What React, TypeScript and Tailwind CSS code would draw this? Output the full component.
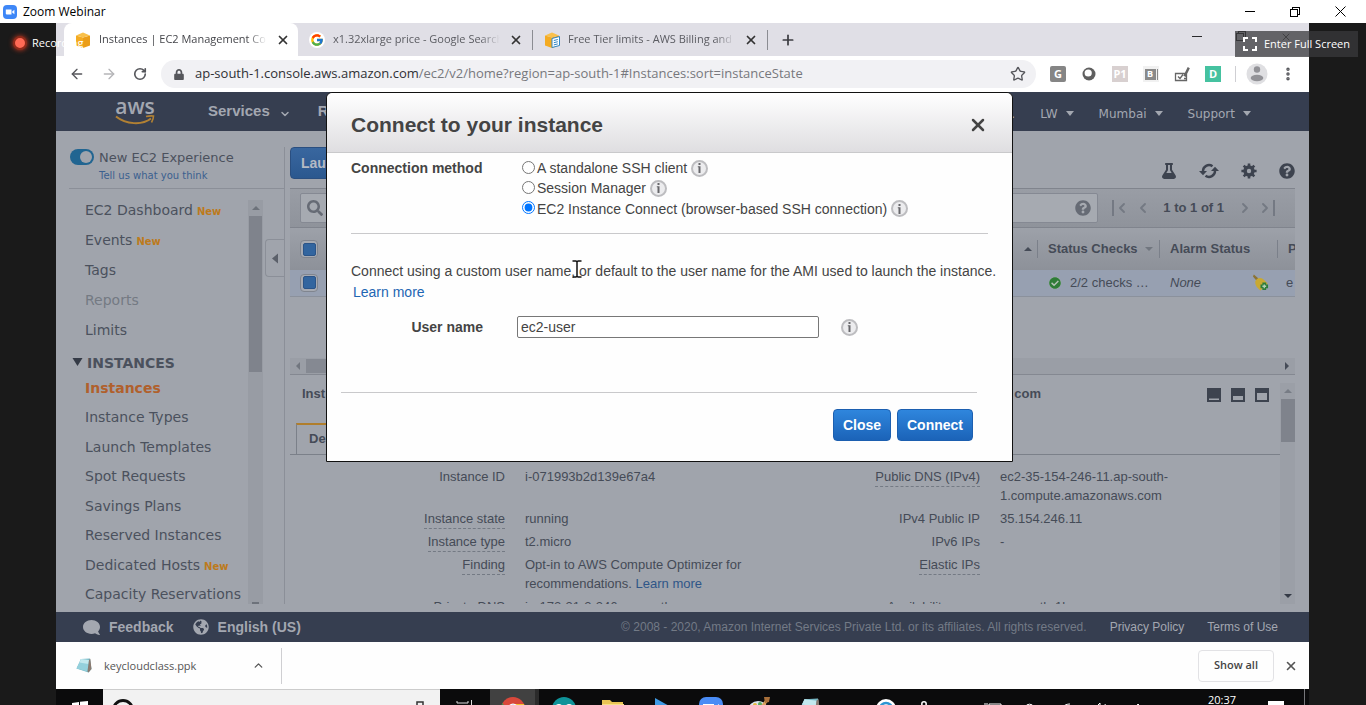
import React from "react";
import {
  FaCheckCircle,
  FaComment,
  FaFlask,
  FaGlobeAmericas,
  FaLock,
  FaQuestionCircle,
  FaSearch,
} from "react-icons/fa";
import { FcGoogle } from "react-icons/fc";
import {
  ArrowLeft,
  ArrowRight,
  ChevronUp,
  ChevronDown,
  ChevronLeft,
  ChevronRight,
  EllipsisVertical,
  Plus,
  RotateCw,
  Star,
  X,
} from "lucide-react";

const UI = "font-['Open_Sans','Noto_Sans',sans-serif]";
const ARIAL = "font-['Liberation_Sans',Arial,sans-serif]";
const VERDANA = "font-['DejaVu_Sans',Verdana,sans-serif]";

function RestoreIcon({ className }: { className?: string }) {
  return (
    <svg viewBox="0 0 10 10" className={className} fill="none" stroke="currentColor" shapeRendering="crispEdges">
      <path d="M0.5 2.5h7v7h-7zM2.5 2.5v-2h7v7h-2" />
    </svg>
  );
}

function CubeIcon({ doc = false }: { doc?: boolean }) {
  return (
    <svg viewBox="0 0 16 16" className="h-4 w-4 shrink-0">
      <path d="M1 3.500 8 5.500V16l-7-2.500z" fill="#f4ab22" />
      <path d="M15 3.500 8 5.500V16l7-2.500z" fill="#eb9d18" />
      <path d="M8 0.500 15 3.500 8 5.500 1 3.500z" fill="#f9c04a" />
      {doc && (
        <g>
          <path d="M8 6.500 15.500 4.500v9L8 15.500z" fill="#fff" stroke="#2f86c4" />
          <path d="M9.800 8.500l4-1M9.800 10.700l4-1M9.800 12.900l4-1" stroke="#2f86c4" />
        </g>
      )}
    </svg>
  );
}

function Tab({ icon, title, active = false }: { icon: React.ReactNode; title: string; active?: boolean }) {
  return (
    <div
      className={
        active
          ? "flex w-[234px] items-center rounded-t-lg bg-white pl-[11px] pr-2 text-[#45464b]"
          : "relative flex w-[235px] items-center pl-[11px] pr-[10px] text-[#5b5c62] after:absolute after:right-0 after:top-[7px] after:h-5 after:w-px after:bg-[#8b8c92]"
      }
    >
      {icon}
      <span className="ml-2 min-w-0 flex-1 overflow-hidden whitespace-nowrap text-[11px] [mask-image:linear-gradient(to_right,black_88%,transparent)]">
        {title}
      </span>
      <button aria-label="Close tab" className="ml-[9px]">
        <X className="h-[14px] w-[14px] text-[#333]" strokeWidth={3} />
      </button>
    </div>
  );
}

function Browser() {
  return (
    <header className={UI}>
      <div className="flex h-[33px] bg-[#e0dfe6] pl-2">
        <Tab active icon={<CubeIcon />} title="Instances | EC2 Management Console" />
        <Tab
          icon={
            <span className="rounded-full bg-white p-px">
              <FcGoogle className="h-[14px] w-[14px]" />
            </span>
          }
          title="x1.32xlarge price - Google Search"
        />
        <Tab icon={<CubeIcon doc />} title="Free Tier limits - AWS Billing and Cost" />
        <button aria-label="New tab" className="ml-3">
          <Plus className="h-4 w-4 text-[#3c3d42]" strokeWidth={2.600} />
        </button>
        <div className="ml-auto flex items-start gap-[34px] pr-[17px] pt-2 text-[#2a2a2d]">
          <button aria-label="Minimize browser" className="mt-[5px] h-px w-[10px] bg-current" />
          <button aria-label="Restore browser">
            <RestoreIcon className="h-[10px] w-[10px]" />
          </button>
          <button aria-label="Close browser">
            <X className="h-3 w-3" strokeWidth={1.500} />
          </button>
        </div>
      </div>
      <div className="flex h-9 items-center bg-white pl-[13px] pr-[13px] text-[#55565b]">
        <button aria-label="Back">
          <ArrowLeft className="h-4 w-4" />
        </button>
        <button aria-label="Forward" className="ml-4 text-[#b5b5b8]">
          <ArrowRight className="h-4 w-4" />
        </button>
        <button aria-label="Reload" className="ml-4">
          <RotateCw className="h-[14px] w-[14px]" strokeWidth={2.800} />
        </button>
        <div className="ml-[14px] flex h-7 min-w-0 flex-1 items-center rounded-full bg-[#f1f1f4] pl-[13px] pr-[10px]">
          <FaLock className="h-[11px] w-[10px] shrink-0" />
          <p className="ml-[11px] flex-1 truncate text-[13px] text-[#77787d]">
            <span className="text-[#2f3035]">ap-south-1.console.aws.amazon.com</span>
            /ec2/v2/home?region=ap-south-1#Instances:sort=instanceState
          </p>
          <button aria-label="Bookmark">
            <Star className="h-4 w-4" />
          </button>
        </div>
        <div className="ml-[14px] flex items-center gap-[15px] text-[11px] font-bold">
          <span className="grid h-4 w-4 place-items-center rounded-xs bg-[#858585] text-white">G</span>
          <svg viewBox="0 0 16 16" className="h-4 w-4">
            <circle cx="8" cy="8" r="6.500" fill="#5f5f5f" />
            <circle cx="7.200" cy="7" r="3.600" fill="#fff" />
          </svg>
          <span className="grid h-4 w-4 place-items-center bg-[#d8d0d0] text-white">P1</span>
          <span className="flex h-4 w-4 items-center justify-center gap-px bg-[#f1f1f1]">
            <span className="flex h-[11px] w-[11px] items-center justify-center bg-[#8a8a8a] text-[9px] text-white">B</span>
            <span className="h-[11px] w-px bg-[#8a8a8a]" />
          </span>
          <svg viewBox="0 0 16 16" className="h-4 w-4" fill="none" stroke="#666" strokeWidth="1.300">
            <path d="M1.500 7.500h11v7h-11zM4 10.500l2 2 3-4M10 10l4-8 1 .6-4 8M10 12.500h2" />
          </svg>
          <span className="grid h-4 w-4 place-items-center bg-[#45c2a0] text-white">D</span>
        </div>
        <span className="ml-[14px] h-4 w-px bg-[#cfcfd3]" />
        <button aria-label="Profile" className="ml-[10px]">
          <svg viewBox="0 0 22 22" className="h-[22px] w-[22px]">
            <circle cx="11" cy="11" r="10.500" fill="#dfdfe2" />
            <circle cx="11" cy="6.500" r="3.200" fill="#929297" />
            <ellipse cx="11" cy="15" rx="6.300" ry="3.200" fill="#929297" />
          </svg>
        </button>
        <button aria-label="Browser menu" className="ml-3">
          <EllipsisVertical className="h-4 w-4" strokeWidth={3.200} />
        </button>
      </div>
    </header>
  );
}

function NavItem({ label }: { label: string }) {
  return (
    <button className="flex items-center gap-2">
      {label}
      <svg viewBox="0 0 8 5" className="h-[5px] w-2 shrink-0" fill="currentColor">
        <path d="M0 0h8L4 5z" />
      </svg>
    </button>
  );
}

function AwsNav() {
  return (
    <nav className="flex h-[39px] items-center bg-[#363e50] pr-[58px] text-[#a3a7b0]">
      <a href="#home" aria-label="aws" className="ml-[59px] flex w-10 flex-col items-center">
        <span className={`text-[21px] leading-[18px] font-semibold ${UI}`}>aws</span>
        <svg viewBox="0 0 40 11" className="h-[11px] w-10" fill="none" stroke="#b28133" strokeWidth="2">
          <path d="M1 1.500C11 9.500 27 10.500 36 3.500" />
          <path d="M31 1.500q4-1 7.500-.5q0 3-2 6.500" strokeWidth="1.600" />
        </svg>
      </a>
      <button className={`ml-[53px] flex items-center gap-[9px] text-[15px] font-bold ${ARIAL}`}>
        Services <ChevronDown className="mt-1 h-3 w-3" strokeWidth={3} />
      </button>
      <button className={`ml-[27px] w-2 overflow-hidden text-[15px] font-bold ${ARIAL}`}>R</button>
      <div className={`ml-auto mt-1 flex gap-[25px] text-xs ${VERDANA}`}>
        <span>.</span>
        <NavItem label="LW" />
        <NavItem label="Mumbai" />
        <NavItem label="Support" />
      </div>
    </nav>
  );
}

const TOP_LINKS: { label: string; isNew?: boolean; muted?: boolean }[] = [
  { label: "EC2 Dashboard", isNew: true },
  { label: "Events", isNew: true },
  { label: "Tags" },
  { label: "Reports", muted: true },
  { label: "Limits" },
];

const INSTANCE_LINKS: { label: string; isNew?: boolean; current?: boolean }[] = [
  { label: "Instances", current: true },
  { label: "Instance Types" },
  { label: "Launch Templates" },
  { label: "Spot Requests" },
  { label: "Savings Plans" },
  { label: "Reserved Instances" },
  { label: "Dedicated Hosts", isNew: true },
  { label: "Capacity Reservations" },
];

function NewTag() {
  return <span className="ml-1 mt-1 text-[10px] font-bold text-[#bd7a1c]">New</span>;
}

function Sidebar() {
  return (
    <aside className={`relative flex w-[229px] shrink-0 flex-col border-r border-[#8b8f98] pl-[13px] text-[#4b515d] ${VERDANA}`}>
      <div className="flex h-[42px] items-start border-b border-[#8b8f98]">
        <label className="relative mt-[2px] ml-px flex h-4 w-6 cursor-pointer">
          <input type="checkbox" defaultChecked aria-label="New EC2 Experience" className="h-4 w-6 appearance-none rounded-full bg-[#216591]" />
          <span className="absolute right-[2px] top-[2px] h-3 w-3 rounded-full bg-[#a0a4ac]" />
        </label>
        <div className="ml-[5px] flex flex-col pt-px">
          <span className="text-[13px] leading-5">New EC2 Experience</span>
          <a href="#feedback" className="text-[10px] leading-4 text-[#3b608f]">
            Tell us what you think
          </a>
        </div>
      </div>
      <div className="flex min-h-0 flex-1 overflow-hidden">
        <div className="min-w-0 flex-1 whitespace-nowrap pl-4 pt-[6px] text-sm">
          <ul>
            {TOP_LINKS.map((l) => (
              <li key={l.label} className={l.muted ? "flex h-[30px] items-center text-[#747a83]" : "flex h-[30px] items-center"}>
                <a href="#nav">{l.label}</a>
                {l.isNew && <NewTag />}
              </li>
            ))}
          </ul>
          <h2 className="-ml-[13px] flex h-7 items-end gap-1 font-bold">
            <svg viewBox="0 0 10 8" className="mb-[7px] h-2 w-[11px]">
              <path d="M0 0h10L5 8z" fill="#343a46" />
            </svg>
            INSTANCES
          </h2>
          <ul className="grid h-[236px] auto-rows-fr">
            {INSTANCE_LINKS.map((l) => (
              <li key={l.label} className="flex items-center">
                <a href="#nav" className={l.current ? "font-bold text-[#b0602c]" : ""}>
                  {l.label}
                </a>
                {l.isNew && <NewTag />}
              </li>
            ))}
          </ul>
        </div>
        <div className="mt-[11px] mr-[21px] flex w-[15px] flex-col items-center overflow-hidden bg-[#989ca4]">
          <svg viewBox="0 0 8 4" className="my-[6px] h-1 w-2 shrink-0">
            <path d="M0 4h8L4 0z" fill="#6d727b" />
          </svg>
          <div className="h-[156px] w-[13px] shrink-0 bg-[#7f838c]" />
          <span className="mt-auto h-[2px] w-[7px] bg-[#6d727b]" />
        </div>
      </div>
      <button
        aria-label="Collapse navigation"
        className="absolute right-0 top-[92px] grid h-[38px] w-[19px] place-items-center rounded-l-sm border border-r-0 border-[#8b8f98]"
      >
        <svg viewBox="0 0 6 10" className="h-[11px] w-[6px]">
          <path d="M6 0v10L0 5z" fill="#5b606a" />
        </svg>
      </button>
    </aside>
  );
}

function BlueBox() {
  return (
    <span className="grid h-[18px] w-[18px] place-items-center rounded-sm border border-[#80858f] bg-[#a6aab2]">
      <input
        type="checkbox"
        defaultChecked
        aria-label="Select row"
        className="h-[13px] w-[13px] appearance-none rounded-xs border border-[#2b5488] bg-[#32659f]"
      />
    </span>
  );
}

function Bell() {
  return (
    <svg viewBox="0 0 18 18" className="h-[17px] w-[17px]">
      <path d="M2 .5 6.500 4.500 4.600 6.800 1 2.600z" fill="#8c7334" />
      <path d="M3.500 8C4.500 4.500 8.500 3 12 5.500l4.500 4.500L9 17.500C6 15.500 3 12 3.500 8z" fill="#c9a932" />
      <path d="M13 9v8M9 13h8" stroke="#2c7d3a" strokeWidth="4" />
      <path d="M13 11v4M11 13h4" stroke="#b5d0b5" strokeWidth="1.400" />
    </svg>
  );
}

function InstanceTable() {
  const cell = "relative before:absolute before:left-0 before:top-3 before:h-[18px] before:w-px before:bg-[#7b808a]";
  return (
    <table className="w-full table-fixed text-left text-[13px] text-[#454b57]">
      <colgroup>
        <col className="w-[38px]" />
        <col />
        <col className="w-[122px]" />
        <col className="w-[118px]" />
        <col className="w-[18px]" />
      </colgroup>
      <thead className="h-[42px] bg-linear-to-b from-[#9da1a9] to-[#8d9199]">
        <tr>
          <th className="pl-[10px]">
            <BlueBox />
          </th>
          <th>
            <svg viewBox="0 0 8 4" className="ml-auto mr-[5px] h-1 w-2">
              <path d="M0 4h8L4 0z" fill="#454b57" />
            </svg>
          </th>
          <th className={`${cell} pl-[11px]`}>
            <span className="flex items-center justify-between pr-[6px]">
              Status Checks
              <svg viewBox="0 0 8 4" className="h-1 w-2">
                <path d="M0 0h8L4 4z" fill="#71767f" />
              </svg>
            </span>
          </th>
          <th className={`${cell} pl-[11px]`}>Alarm Status</th>
          <th className={`${cell} overflow-hidden pl-[11px]`}>P</th>
        </tr>
      </thead>
      <tbody>
        <tr className="h-[26px] border-b border-[#8b919c] bg-[#97a0b1]">
          <td className="pl-[10px]">
            <BlueBox />
          </td>
          <td />
          <td className="pl-3">
            <span className="flex items-center gap-[9px] whitespace-nowrap">
              <span className="rounded-full bg-[#b5c2b8]">
                <FaCheckCircle className="h-3 w-3 text-[#2f7c38]" />
              </span>
              2/2 checks …
            </span>
          </td>
          <td className="pl-[11px]">
            <span className="flex items-center justify-between pr-2">
              <em>None</em>
              <Bell />
            </span>
          </td>
          <td className="overflow-hidden pl-[9px]">e</td>
        </tr>
      </tbody>
    </table>
  );
}

function Term({ children, dashed = false }: { children: React.ReactNode; dashed?: boolean }) {
  return (
    <dt className="text-right">
      <span className={dashed ? "border-b border-dashed border-[#747a84] pb-[2px]" : ""}>{children}</span>
    </dt>
  );
}

function PanelIcon({ d }: { d: string }) {
  return (
    <svg viewBox="0 0 14 14" className="h-[14px] w-[14px]">
      <path d="M0 0h14v14H0z" fill="#3d434f" />
      <path d={d} fill="#a0a4ac" />
    </svg>
  );
}

function Details() {
  return (
    <div className="flex min-h-0 flex-1 overflow-hidden border-t border-[#848891]">
      <div className="flex min-w-0 flex-1 flex-col">
        <div className="flex h-10 shrink-0 items-center justify-between pl-3 pr-[11px] text-sm font-bold">
          <span className="text-[13px]">Inst</span>
          <div className="flex flex-1 items-center justify-end">
            <span className="text-[13px]">com</span>
            <div className="ml-[166px] flex gap-[10px]">
              <PanelIcon d="M2 10.500h10v1.500H2z" />
              <PanelIcon d="M2 8h10v4H2z" />
              <PanelIcon d="M2 5h10v7H2z" />
            </div>
          </div>
        </div>
        <div className="flex h-10 shrink-0 border-b border-[#7b8089] pl-[6px] pt-2">
          <button className="w-[110px] border-l border-t-2 border-l-[#7b8089] border-t-[#b07e2c] pl-3 text-left text-[13px] font-bold">
            Description
          </button>
        </div>
        <dl className="grid min-h-0 flex-1 auto-rows-min grid-cols-[215px_minmax(0,1fr)_155px_minmax(0,1fr)] gap-x-5 gap-y-1 overflow-hidden pt-3 text-[13px] leading-[19px]">
          <Term>Instance ID</Term>
          <dd>i-071993b2d139e67a4</dd>
          <Term dashed>Public DNS (IPv4)</Term>
          <dd className="max-w-[180px]">
            ec2-35-154-246-11.ap-south-
            <br />
            1.compute.amazonaws.com
          </dd>
          <Term dashed>Instance state</Term>
          <dd>running</dd>
          <Term>IPv4 Public IP</Term>
          <dd>35.154.246.11</dd>
          <Term dashed>Instance type</Term>
          <dd>t2.micro</dd>
          <Term>IPv6 IPs</Term>
          <dd>-</dd>
          <Term dashed>Finding</Term>
          <dd>
            Opt-in to AWS Compute Optimizer for recommendations.{" "}
            <a href="#optimizer" className="text-[#2f5688]">
              Learn more
            </a>
          </dd>
          <Term dashed>Elastic IPs</Term>
          <dd />
          <Term>Private DNS</Term>
          <dd>ip-172-31-3-246.ap-south-</dd>
          <Term>Availability zone</Term>
          <dd>ap-south-1b</dd>
        </dl>
      </div>
      <div className="mt-2 flex w-[15px] flex-col items-center bg-[#9b9fa7]">
        <svg viewBox="0 0 8 4" className="my-[6px] h-1 w-2">
          <path d="M0 4h8L4 0z" fill="#777c85" />
        </svg>
        <div className="h-[43px] w-[14px] bg-[#7f838c]" />
        <svg viewBox="0 0 8 4" className="mb-[6px] mt-auto h-1 w-2">
          <path d="M0 0h8L4 4z" fill="#343a46" />
        </svg>
      </div>
    </div>
  );
}

function RefreshIcon() {
  return (
    <svg viewBox="0 0 20 16" className="h-4 w-5" fill="none" stroke="currentColor" strokeWidth="2.400">
      <path d="M4 8.500a6 6 0 0 1 9.500-5.200M16 7.500a6 6 0 0 1-9.500 5.200" />
      <path d="M0 8h8L4 12.200zM20 8h-8l4-4.200z" fill="currentColor" stroke="none" />
    </svg>
  );
}

function GearIcon() {
  return (
    <svg viewBox="0 0 16 16" className="h-4 w-4" fill="none" stroke="currentColor">
      <circle cx="8" cy="8" r="4" strokeWidth="3.400" />
      <path d="M8 .4v15.200M.4 8h15.200M2.700 2.700l10.600 10.600M13.300 2.700 2.700 13.300" strokeWidth="2.600" />
      <circle cx="8" cy="8" r="2.200" fill="#a0a4ac" stroke="none" />
    </svg>
  );
}

function Console() {
  return (
    <div className="flex min-h-0 flex-1 bg-[#a0a4ac] pb-2 pr-[14px] pt-4">
      <Sidebar />
      <main className={`ml-[5px] flex min-w-0 flex-1 flex-col text-[#454b57] ${ARIAL}`}>
        <div className="flex h-[41px] shrink-0 items-start justify-between">
          <button className="h-8 w-32 rounded-sm border border-[#2b4f80] bg-linear-to-b from-[#39679f] to-[#2b588f] pl-[10px] text-left text-sm font-bold text-[#b5bac4]">
            Launch Instance
          </button>
          <div className="flex items-center gap-[22px] pt-4 text-[#3d434f]">
            <button aria-label="Experiments">
              <FaFlask className="h-4 w-4" />
            </button>
            <button aria-label="Refresh">
              <RefreshIcon />
            </button>
            <button aria-label="Settings">
              <GearIcon />
            </button>
            <button aria-label="Help">
              <FaQuestionCircle className="h-4 w-4" />
            </button>
          </div>
        </div>
        <div className="flex h-10 shrink-0 items-center border-y border-[#80848d] bg-linear-to-b from-[#999da5] to-[#8f939b] pl-[10px] pr-5">
          <div className="flex h-[30px] min-w-0 flex-1 items-center rounded-xs border border-[#858993] bg-[#a6aab1] px-[6px]">
            <FaSearch className="h-4 w-4 text-[#666b75]" />
            <input aria-label="Filter instances" className="min-w-0 flex-1 bg-transparent px-2" />
            <FaQuestionCircle className="h-4 w-4 text-[#666b75]" />
          </div>
          <div className="ml-[14px] flex items-center text-sm text-[#747983]">
            <button aria-label="First page" className="flex border-l-2 border-current">
              <ChevronLeft className="h-4 w-4" strokeWidth={2.800} />
            </button>
            <button aria-label="Previous page" className="ml-[5px]">
              <ChevronLeft className="h-4 w-4" strokeWidth={2.800} />
            </button>
            <span className="ml-3 mr-[13px] text-[13px] font-bold text-[#454b57]">1 to 1 of 1</span>
            <button aria-label="Next page">
              <ChevronRight className="h-4 w-4" strokeWidth={2.800} />
            </button>
            <button aria-label="Last page" className="ml-1 flex border-r-2 border-current">
              <ChevronRight className="h-4 w-4" strokeWidth={2.800} />
            </button>
          </div>
        </div>
        <InstanceTable />
        <div className="mt-[61px] flex h-4 shrink-0 items-center justify-between bg-[#9a9ea6] px-[6px]">
          <svg viewBox="0 0 4 8" className="h-2 w-1">
            <path d="M4 0v8L0 4z" fill="#71767f" />
          </svg>
          <div className="ml-[6px] mr-auto h-[14px] w-96 bg-[#858992]" />
          <svg viewBox="0 0 4 8" className="h-2 w-1">
            <path d="M0 0v8l4-4z" fill="#454b57" />
          </svg>
        </div>
        <Details />
      </main>
    </div>
  );
}

function Info() {
  return (
    <button
      aria-label="More information"
      className="grid h-[17px] w-[17px] place-items-center rounded-full border-2 border-[#bdbdc0] bg-[#ececee]"
    >
      <svg viewBox="0 0 5 10" className="h-[10px] w-[5px]" fill="#66666a">
        <path d="M1.500 0h2v2h-2zM.8 3.300h2.700v6.700h-2V4.300H.8z" />
      </svg>
    </button>
  );
}

const METHODS = ["A standalone SSH client", "Session Manager", "EC2 Instance Connect (browser-based SSH connection)"];

function ConnectDialog() {
  return (
    <div
      role="dialog"
      aria-label="Connect to your instance"
      className={`absolute left-[270px] top-[69px] z-10 w-[687px] rounded-t-md border border-[#111] bg-[#fefefe] text-sm text-[#444] ${ARIAL}`}
    >
      <div className="flex h-[60px] items-center justify-between rounded-t-md border-b border-[#c9c9cb] bg-linear-to-b from-white to-[#dfdee1] px-6 pt-1">
        <h1 className="text-[21px] font-bold">Connect to your instance</h1>
        <button aria-label="Close dialog">
          <X className="h-5 w-5" strokeWidth={3} />
        </button>
      </div>
      <div className="px-6 pt-[5px]">
        <fieldset className="flex h-[76px] items-start border-b border-[#c9c9cb]">
          <legend className="float-left w-[171px] font-bold leading-[21px]">Connection method</legend>
          <div className="grid h-[61px] auto-rows-fr">
            {METHODS.map((m, i) => (
              <div key={m} className="flex items-center gap-1">
                <label className="flex items-center gap-[2px]">
                  <input type="radio" name="method" defaultChecked={i === 2} className="m-0 mb-[2px] h-[13px] w-[13px]" />
                  {m}
                </label>
                <Info />
              </div>
            ))}
          </div>
        </fieldset>
        <div className="pt-[27px]">
          <p className="whitespace-nowrap leading-5">
            Connect using a custom user name, or default to the user name for the AMI used to launch the instance.
          </p>
          <a href="#learn" className="ml-[2px] leading-[22px] text-[#1f66b3]">
            Learn more
          </a>
        </div>
        <div className="mt-[13px] flex items-center">
          <label htmlFor="username" className="w-[132px] text-right font-bold">
            User name
          </label>
          <input
            id="username"
            defaultValue="ec2-user"
            className="ml-[34px] h-[22px] w-[302px] rounded-xs border border-[#777] bg-white px-[3px]"
          />
          <span className="ml-[22px] flex">
            <Info />
          </span>
        </div>
      </div>
      <div className="ml-[14px] mr-[35px] mt-[54px] flex justify-end gap-[6px] border-t border-[#c9c9cb] pb-5 pt-4 font-bold text-white">
        <button className="h-8 rounded-sm border border-[#1c5fb0] bg-linear-to-b from-[#2f86dd] to-[#1b63b8] px-[9px]">Close</button>
        <button className="mr-1 h-8 rounded-sm border border-[#1c5fb0] bg-linear-to-b from-[#2f86dd] to-[#1b63b8] px-[9px]">Connect</button>
      </div>
      <svg viewBox="0 0 10 18" className="absolute left-[245px] top-[167px] h-[18px] w-[10px]" fill="none" stroke="#111" strokeWidth="1.500">
        <path d="M0.500 1h3.500l1 1 1-1h3.500M5 2v14M.5 17H4l1-1 1 1h3.500" />
      </svg>
    </div>
  );
}

function ConsoleFooter() {
  return (
    <footer className={`flex h-[30px] shrink-0 items-center bg-[#363e50] pl-[27px] pr-[31px] text-[#a3a7b0] ${ARIAL}`}>
      <button className="flex items-center gap-[9px] text-sm font-bold">
        <FaComment className="h-[17px] w-[17px] -scale-x-100" /> Feedback
      </button>
      <button className="ml-[19px] flex items-center gap-[9px] text-sm font-bold">
        <FaGlobeAmericas className="h-4 w-4" /> English (US)
      </button>
      <p className="ml-auto text-xs text-[#737a86]">
        © 2008 - 2020, Amazon Internet Services Private Ltd. or its affiliates. All rights reserved.
      </p>
      <a href="#privacy" className="ml-[23px] text-xs">
        Privacy Policy
      </a>
      <a href="#terms" className="ml-[23px] text-xs">
        Terms of Use
      </a>
    </footer>
  );
}

function NotePad({ className }: { className?: string }) {
  return (
    <svg viewBox="0 0 16 15" className={className}>
      <path d="M5 1 14 .5 15.500 11l-3 3.500L.5 10.500z" fill="#78b9c6" />
      <path d="M5 1l8 1-1.500 11.500L.5 10.500z" fill="#94d0dc" />
      <path d="M5 1l8 1-.6 4L3.500 4.500z" fill="#c3e8ee" />
      <path d="M13 2 14.300 .8 15.500 11l-3 3.500-1-1z" fill="#8a7a70" />
    </svg>
  );
}

function Downloads() {
  return (
    <div className={`flex h-[47px] shrink-0 items-center bg-[#fefefe] pl-5 pr-[11px] text-[11px] text-[#555] ${UI}`}>
      <div className="flex h-9 w-[206px] items-center border-r border-[#cfcfd2] pr-4">
        <NotePad className="h-[15px] w-4" />
        <span className="ml-3 pt-[2px]">keycloudclass.ppk</span>
        <button aria-label="Download options" className="ml-auto">
          <ChevronUp className="h-[13px] w-[13px]" strokeWidth={2.400} />
        </button>
      </div>
      <button className="ml-auto h-8 rounded-sm border border-[#e2e2e5] px-[15px] font-semibold text-[#444]">Show all</button>
      <button aria-label="Close downloads" className="ml-[10px]">
        <X className="h-[14px] w-[14px]" strokeWidth={2.800} />
      </button>
    </div>
  );
}

function AppCell({ label, children }: { label: string; children: React.ReactNode }) {
  return (
    <button aria-label={label} className="grid w-[49px] place-items-center">
      {children}
    </button>
  );
}

function Taskbar() {
  return (
    <div className={`h-4 shrink-0 overflow-hidden bg-[#0b0b0c] text-white ${UI}`}>
      <div className="flex h-10">
        <button aria-label="Start" className="grid w-[47px] place-items-center">
          <svg viewBox="0 0 16 16" className="h-4 w-4" fill="#fff">
            <path d="M0 2l7-1v6.500H0zM8 .8 16 0v7.500H8zM0 8.500h7V15l-7-1zM8 8.500h8V16l-8-1z" />
          </svg>
        </button>
        <div className="flex w-[337px] items-center border-t border-[#ccc] bg-[#f2f2f2] pl-[9px] pr-[15px] text-[#555]">
          <span className="h-[22px] w-[22px] rounded-full border-[3px] border-[#111]" />
          <span className="ml-[9px] text-[13px] leading-4">Type here to search</span>
          <svg viewBox="0 0 10 18" className="ml-auto h-[18px] w-[10px]" fill="none" stroke="#333" strokeWidth="1.500">
            <rect x="2" y="1" width="6" height="10" />
            <path d="M0 8v6h10V8M5 14v4" />
          </svg>
        </div>
        <button aria-label="Task view" className="grid w-[50px] place-items-center">
          <svg viewBox="0 0 18 18" className="h-[18px] w-[18px]" fill="none" stroke="#ddd">
            <path d="M1 1v2h11V1M1 6h11v7H1zM1 17v-1h11v1M15.500 0v18" />
          </svg>
        </button>
        <button aria-label="Chrome" className="grid w-[49px] place-items-center border-r-4 border-[#2b2b2b] bg-[#414141]">
          <svg viewBox="0 0 24 24" className="h-6 w-6">
            <circle cx="12" cy="12" r="12" fill="#d9483b" />
            <path d="M1.600 6 12 24A12 12 0 0 1 1.600 6z" fill="#3a9c4f" />
            <path d="M12 7h11A12 12 0 0 1 12 24z" fill="#f2c230" />
            <circle cx="12" cy="12" r="5.500" fill="#fff" />
            <circle cx="12" cy="12" r="4.300" fill="#4285f4" />
          </svg>
        </button>
        <AppCell label="Arduino">
          <svg viewBox="0 0 24 24" className="h-6 w-6">
            <circle cx="12" cy="12" r="12" fill="#0f9399" />
            <path d="M12 12c-2-3-3-4-5-4a4 4 0 0 0 0 8c2 0 3-1 5-4s3-4 5-4a4 4 0 0 1 0 8c-2 0-3-1-5-4z" fill="none" stroke="#fff" strokeWidth="2" />
          </svg>
        </AppCell>
        <AppCell label="File Explorer">
          <svg viewBox="0 0 22 20" className="h-5 w-[22px]">
            <path d="M0 1h8l2 2h11v17H0z" fill="#e9c455" />
            <path d="M0 5h22v15H0z" fill="#f8df86" />
          </svg>
        </AppCell>
        <AppCell label="Player">
          <svg viewBox="0 0 20 22" className="h-[22px] w-5">
            <path d="M3 0 19 9 3 22z" fill="#3f9be6" />
          </svg>
        </AppCell>
        <AppCell label="Zoom">
          <svg viewBox="0 0 24 24" className="h-6 w-6">
            <rect width="24" height="24" rx="7" fill="#4a8cf5" />
            <path d="M4 7h11v10H4zM16 10l4-3v10l-4-3z" fill="#fff" />
          </svg>
        </AppCell>
        <AppCell label="Paint">
          <svg viewBox="0 0 24 24" className="h-6 w-6">
            <ellipse cx="10" cy="13" rx="10" ry="9" fill="#d9e6ee" />
            <circle cx="7" cy="8" r="2" fill="#e5b93c" />
            <circle cx="12" cy="7" r="2" fill="#57a85f" />
            <path d="M9 17 19 3" stroke="#d9a15c" strokeWidth="3" />
            <path d="M16 0h6l-1 5-4 1z" fill="#a86f3a" />
          </svg>
        </AppCell>
        <AppCell label="Notepad">
          <NotePad className="h-6 w-6" />
        </AppCell>
        <div className="ml-auto flex items-center gap-5 pr-1">
          <svg viewBox="0 0 20 20" className="h-5 w-5">
            <circle cx="10" cy="10" r="10" fill="#fff" />
            <circle cx="10" cy="10" r="6" fill="none" stroke="#2c95d2" strokeWidth="2.500" />
          </svg>
          <svg viewBox="0 0 16 16" className="h-4 w-4" fill="none" stroke="#fff" strokeWidth="1.500">
            <circle cx="8" cy="3" r="2.200" />
            <path d="M3 16c0-10 10-10 10 0" />
          </svg>
          <ChevronUp className="h-3 w-3" />
          <svg viewBox="0 0 18 12" className="h-3 w-[18px]" fill="none" stroke="#fff">
            <path d="M5 1h12v9H5zM1 0v4M3 0v4M2 4v4" />
          </svg>
          <svg viewBox="0 0 16 12" className="h-3 w-4" fill="none" stroke="#fff">
            <path d="M3 10a3 3 0 0 1 0-6 5 5 0 0 1 9 0 3 3 0 0 1 1 6z" />
          </svg>
          <svg viewBox="0 0 14 14" className="h-[14px] w-[14px]" fill="none" stroke="#fff">
            <path d="M2 13C2 6 6 2 12 2M6 13c0-4 2-6 6-6" />
          </svg>
          <svg viewBox="0 0 16 14" className="h-[14px] w-4" fill="none" stroke="#fff">
            <path d="M1 5h3l4-4v12l-4-4H1zM11 4q2 3 0 6M13 2q3 5 0 10" />
          </svg>
          <svg viewBox="0 0 14 14" className="h-[14px] w-[14px]" fill="none" stroke="#fff">
            <path d="M1 13 10 2l2 2-9 10z" />
          </svg>
          <span className="text-[11px]">ENG</span>
          <span className="mb-[19px] ml-1 text-[11px] leading-4">20:37</span>
          <svg viewBox="0 0 16 16" className="ml-3 h-4 w-4" fill="#fff">
            <path d="M0 0h16v12h-5l-3 4v-4H0z" />
            <path d="M3 4h10v1H3zM3 7h10v1H3z" fill="#111" />
          </svg>
          <span className="h-10 w-px bg-[#77777b]" />
        </div>
      </div>
    </div>
  );
}

export default function App() {
  return (
    <div className="flex h-screen flex-col overflow-hidden bg-[#1a1a1a]">
      <div className={`flex h-[23px] shrink-0 items-center bg-white pl-[3px] pr-5 text-black ${UI}`}>
        <svg viewBox="0 0 14 14" className="h-[14px] w-[14px]">
          <rect width="14" height="14" rx="4" fill="#3e87f7" />
          <path d="M2.800 4.500h5.700v5H3.500l-.7-.7zM9.200 6.400l2.200-1.600v4.400L9.200 7.600z" fill="#fff" />
        </svg>
        <span className="ml-[6px] text-xs">Zoom Webinar</span>
        <div className="ml-auto flex items-center gap-[35px]">
          <button aria-label="Minimize" className="h-px w-[10px] bg-black" />
          <button aria-label="Restore">
            <RestoreIcon className="h-[10px] w-[10px]" />
          </button>
          <button aria-label="Close">
            <svg viewBox="0 0 11 11" className="h-[11px] w-[11px]" stroke="#000">
              <path d="M.5.5l10 10M10.500.5l-10 10" />
            </svg>
          </button>
        </div>
      </div>
      <div className="relative flex min-h-0 flex-1">
        <div className="w-14 shrink-0" />
        <section className="relative flex min-w-0 flex-1 flex-col">
          <Browser />
          <AwsNav />
          <Console />
          <ConsoleFooter />
          <Downloads />
          <Taskbar />
          <ConnectDialog />
        </section>
        <div className="w-[57px] shrink-0" />
        <div className={`absolute left-[13px] top-3 flex items-center gap-[5px] text-[11px] text-white ${UI}`}>
          <span className="h-[14px] w-[14px] rounded-full border-2 border-[#8e2a1a] bg-[#ff6a55] shadow-[0_0_5px_#d03a20]" />
          Recording
        </div>
        <button
          className={`absolute right-2 top-2 flex h-[26px] items-center gap-[7px] bg-[#3a3a3c]/75 px-2 text-[11px] text-white ${UI}`}
        >
          <svg viewBox="0 0 14 14" className="h-[14px] w-[14px]" fill="none" stroke="#fff" strokeWidth="2">
            <path d="M1 5V1h4M9 1h4v4M13 9v4H9M5 13H1V9" />
          </svg>
          Enter Full Screen
        </button>
      </div>
    </div>
  );
}
